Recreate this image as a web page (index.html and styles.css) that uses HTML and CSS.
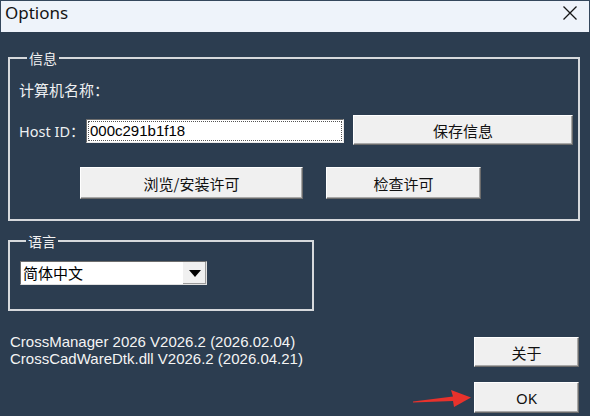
FILE: index.html
```html
<!DOCTYPE html>
<html lang="zh-CN">
<head>
    <meta charset="UTF-8">
    <title>Options</title>
    <link rel="stylesheet" href="styles.css">
</head>
<body>
    <div class="window">
        <div class="titlebar">
            <span class="title">Options</span>
            <svg class="close" width="16" height="16" viewBox="0 0 16 16">
                <path d="M1.5 1.5 L14.5 14.5 M14.5 1.5 L1.5 14.5" stroke="#151515" stroke-width="1.3" fill="none"/>
            </svg>
        </div>

        <fieldset class="group group-info">
            <legend>信息</legend>
            <div class="row row-name">计算机名称：</div>
            <div class="row row-host">
                <label class="host-label" for="hostId">Host ID：</label>
                <input class="host-input" id="hostId" type="text" value="000c291b1f18" readonly>
                <button class="btn btn-save">保存信息</button>
            </div>
            <div class="row row-actions">
                <button class="btn btn-browse">浏览/安装许可</button>
                <button class="btn btn-check">检查许可</button>
            </div>
        </fieldset>

        <fieldset class="group group-lang">
            <legend>语言</legend>
            <div class="combo">
                <span class="combo-text">简体中文</span>
                <span class="combo-arrow">
                    <svg width="12" height="7" viewBox="0 0 12 7"><path d="M0 0 H12 L6 7 Z" fill="#000"/></svg>
                </span>
            </div>
        </fieldset>

        <div class="footer">
            <div class="version">
                <div>CrossManager 2026 V2026.2 (2026.02.04)</div>
                <div>CrossCadWareDtk.dll V2026.2 (2026.04.21)</div>
            </div>
            <div class="footer-buttons">
                <button class="btn btn-about">关于</button>
                <button class="btn btn-ok">OK</button>
            </div>
        </div>

        <!-- red annotation arrow pointing at OK -->
        <svg class="arrow" width="64" height="22" viewBox="0 0 64 22">
            <polygon points="3,13.5 43,8.5 41,2 61,9.5 44,19 43,13 3,14.5" fill="#e8322c"/>
        </svg>
    </div>
</body>
</html>
```

FILE: styles.css
```css
body {
    margin: 0;
    background: #2c3d50;
    font-family: "Noto Sans", "Noto Sans CJK SC", sans-serif;
}
.window {
    position: relative;
    width: 590px;
    height: 416px;
    overflow: hidden;
    background: #2c3d50;
    color: #eef0f2;
}
.titlebar {
    display: flex;
    justify-content: space-between;
    align-items: flex-start;
    height: 32px;
    box-sizing: border-box;
    background: #eef3fa;
    border: 1px solid #34475c;
    border-bottom: none;
    padding: 0 11px 0 4px;
}
.title {
    font-size: 17px;
    line-height: 24px;
    color: #141414;
}
.close {
    margin-top: 4px;
}
.group {
    margin: 0 0 0 8px;
    padding: 0;
    border: 2px solid #d6d9dc;
    box-sizing: border-box;
    min-width: 0;
}
.group legend {
    font-family: "Noto Sans CJK SC", sans-serif;
    font-size: 14px;
    line-height: 16px;
    padding: 0 2px;
    color: #f2f2f2;
}
.group-info {
    width: 572px;
    margin-top: 18px;
    padding: 13px 5px 20px 9px;
}
.group-info legend {
    margin-left: 8px;
}
.group-lang {
    width: 306px;
    margin-top: 12px;
    padding: 12px 0 24px 10px;
}
.group-lang legend {
    margin-left: 6px;
}
.row {
    display: flex;
    align-items: center;
}
.row-name {
    height: 20px;
    font-family: "Noto Sans CJK SC", sans-serif;
    font-size: 15px;
}
.row-host {
    margin-top: 16px;
    height: 30px;
}
.host-label {
    flex: 0 0 67px;
    white-space: nowrap;
    font-size: 14.5px;
}
.host-input {
    flex: 0 0 258px;
    height: 24px;
    box-sizing: border-box;
    margin: 1px 9px 0 0;
    padding: 0 3px;
    border: 1px solid;
    border-color: #6d6d6d #e8e8e8 #e8e8e8 #6d6d6d;
    outline: 1px dotted #555;
    outline-offset: -3px;
    background: #fff;
    color: #000;
    font-family: "Liberation Sans", sans-serif;
    font-size: 15px;
}
.btn {
    box-sizing: border-box;
    padding: 0;
    background: #f0f0f0;
    border: 1px solid;
    border-color: #ffffff #6b6b6b #6b6b6b #ffffff;
    box-shadow: inset -1px -1px 0 #a8a8a8;
    color: #111;
    font-family: "Noto Sans CJK SC", sans-serif;
    font-size: 15px;
}
.btn-save {
    flex: 0 0 220px;
    height: 30px;
}
.row-actions {
    margin-top: 22px;
    height: 32px;
    padding-left: 61px;
    gap: 23px;
}
.btn-browse {
    width: 223px;
    height: 32px;
}
.btn-check {
    width: 155px;
    height: 32px;
}
.combo {
    display: flex;
    align-items: stretch;
    width: 187px;
    height: 24px;
    box-sizing: border-box;
    background: #fff;
    border: 1px solid;
    border-color: #6d6d6d #e0e0e0 #e0e0e0 #6d6d6d;
}
.combo-text {
    flex: 1;
    padding-left: 2px;
    line-height: 22px;
    color: #000;
    font-family: "Noto Sans CJK SC", sans-serif;
    font-size: 15px;
}
.combo-arrow {
    display: flex;
    align-items: center;
    justify-content: center;
    width: 23px;
    background: #f0f0f0;
    border-left: 1px solid #fff;
    box-shadow: inset -1px -1px 0 #9a9a9a;
}
.footer {
    display: flex;
    justify-content: space-between;
    align-items: flex-start;
}
.version {
    margin-top: 22px;
    padding-left: 10px;
    font-family: "Liberation Sans", sans-serif;
    font-size: 15px;
    line-height: 17px;
    color: #f4f4f4;
}
.footer-buttons {
    display: flex;
    flex-direction: column;
    gap: 15px;
    margin: 26px 11px 0 0;
}
.btn-about {
    width: 105px;
    height: 30px;
}
.btn-ok {
    width: 105px;
    height: 31px;
    font-family: "Noto Sans", sans-serif;
    font-size: 15px;
}
.arrow {
    position: absolute;
    left: 410px;
    top: 388px;
}
```
